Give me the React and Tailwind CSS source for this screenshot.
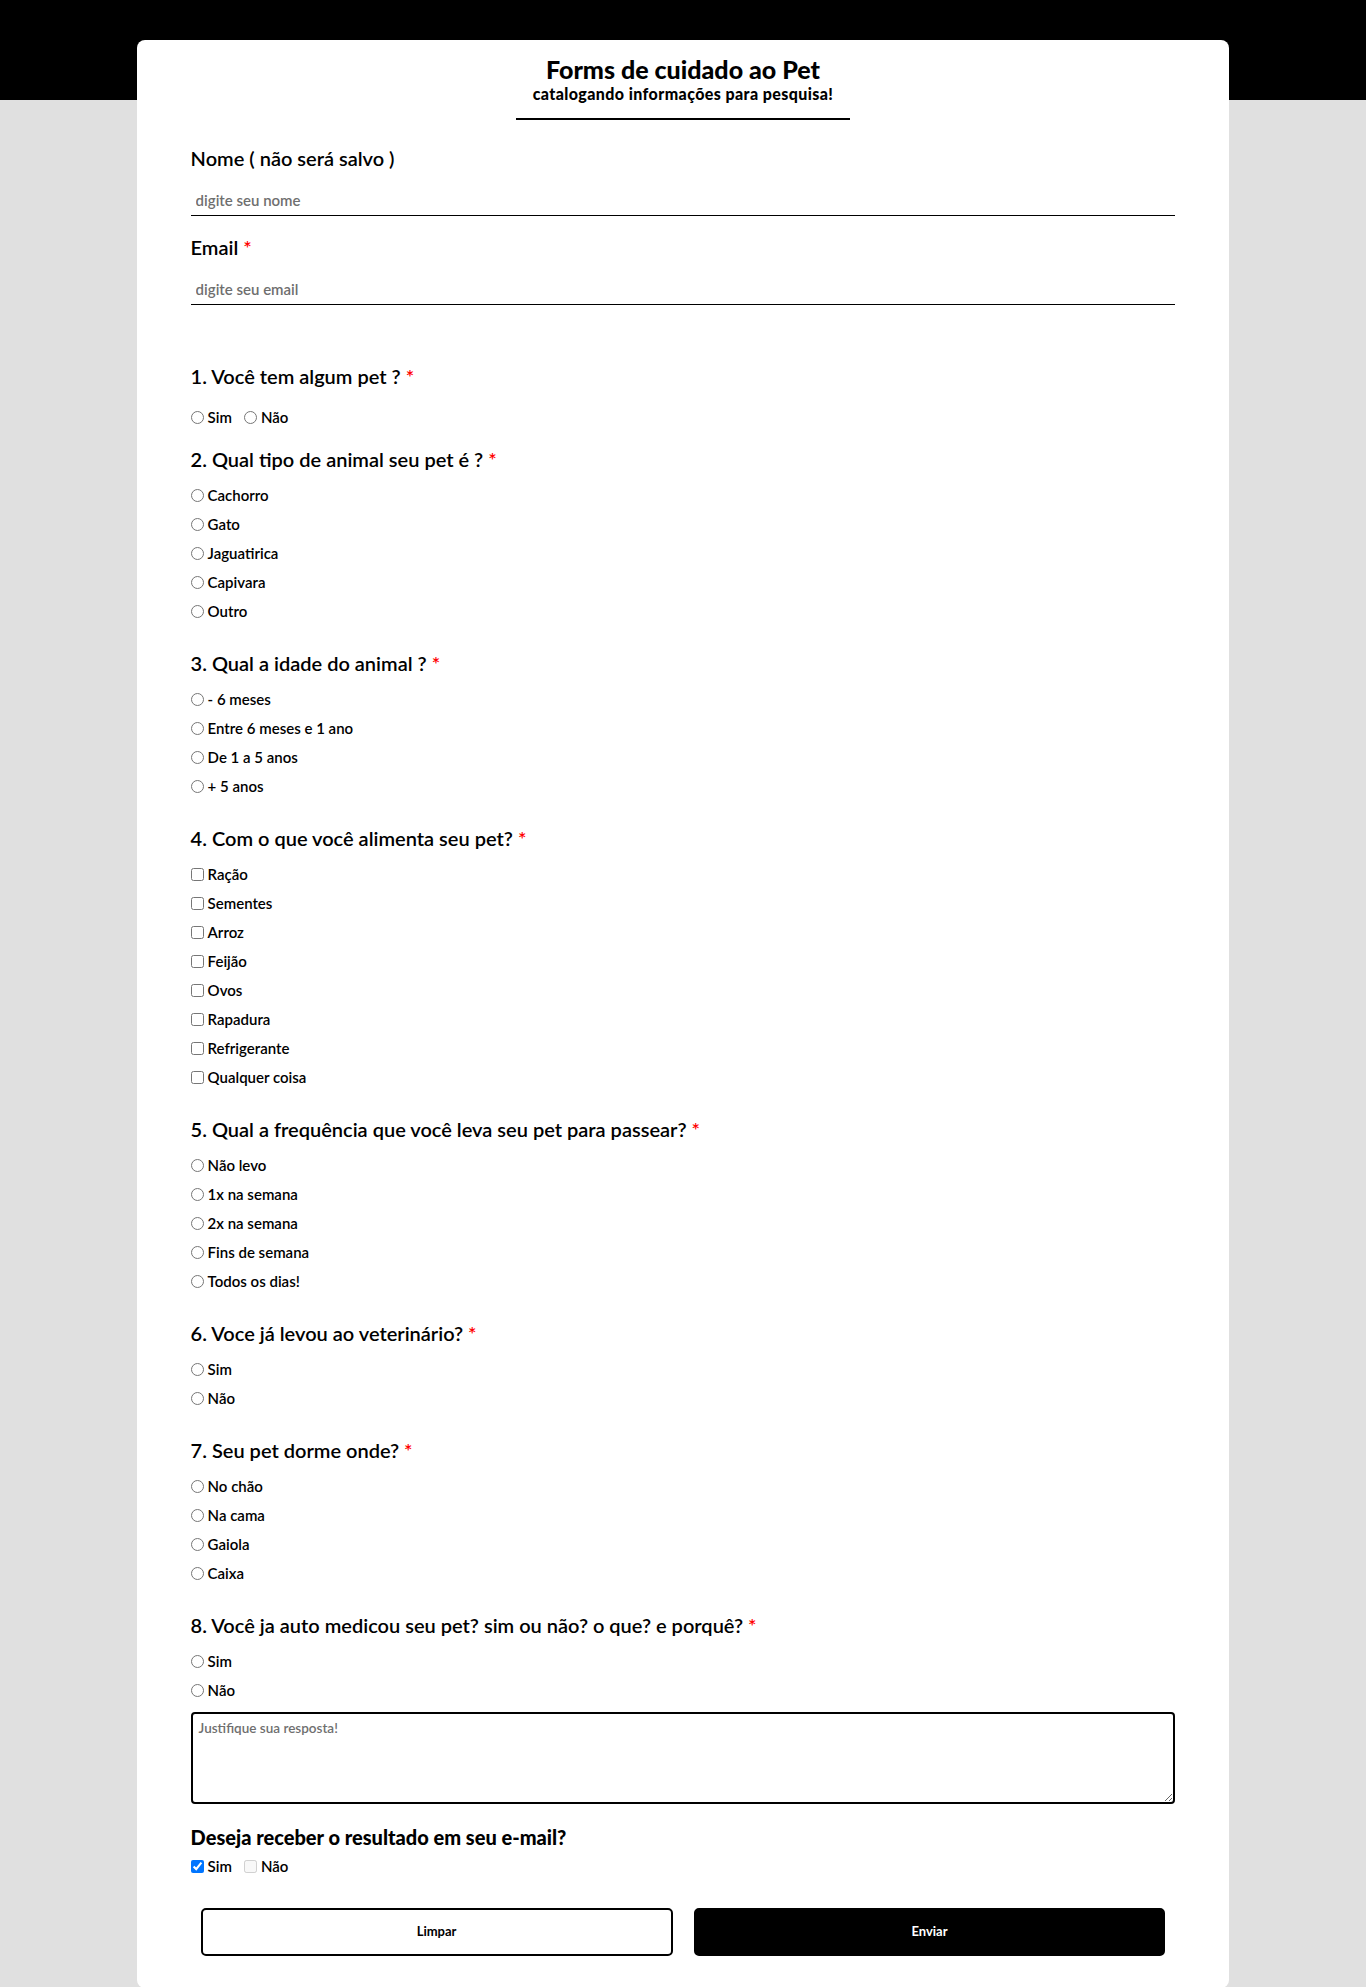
import React from "react";

const Req = () => <span className="text-[#ff0000] ml-[5px]">*</span>;

function Heading({ children, req = true }) {
  return (
    <h2 className="text-[20px] leading-[24px] font-semibold text-black">
      {children}
      {req && <Req />}
    </h2>
  );
}

function Option({ type = "radio", name, label }) {
  return (
    <label className="flex items-center gap-[4px] text-[15px] leading-[20px] font-semibold text-black">
      <input type={type} name={name} className="w-[13px] h-[13px]" />
      <span>{label}</span>
    </label>
  );
}

function Question({ title, name, type = "radio", options, mt = "mt-[30px]" }) {
  return (
    <section className={mt}>
      <Heading>{title}</Heading>
      <div className="mt-[14px] flex flex-col gap-[9px]">
        {options.map((o) => (
          <Option key={o} type={type} name={name} label={o} />
        ))}
      </div>
    </section>
  );
}

export default function App() {
  return (
    <div className="min-h-[1987px] bg-[linear-gradient(to_bottom,#000_100px,#e0e0e0_100px)] pt-[40px] font-[Lato,'Noto_Sans',sans-serif] text-black">
      <div className="mx-auto w-[80%] bg-white rounded-[8px] px-[54px] pt-[15px] pb-[32px] min-h-[1947px]">
        <header className="mx-auto w-[334px] border-b-2 border-black pb-[16px] text-center">
          <h1 className="text-[25px] leading-[28px] font-black">Forms de cuidado ao Pet</h1>
          <p className="mt-[2px] text-[16px] leading-[17px] font-black tracking-[0.4px]">catalogando informações para pesquisa!</p>
        </header>

        <div className="mt-[26px]">
          <label className="block text-[20px] leading-[24px] font-semibold">Nome ( não será salvo )</label>
          <input
            type="text"
            placeholder="digite seu nome"
            className="mt-[15px] block w-full h-[31px] border-b border-black px-[5px] text-[15px] font-semibold placeholder:text-[#6f6f6f] outline-none"
          />
        </div>
        <div className="mt-[19px]">
          <label className="block text-[20px] leading-[24px] font-semibold">
            Email<Req />
          </label>
          <input
            type="email"
            placeholder="digite seu email"
            className="mt-[15px] block w-full h-[31px] border-b border-black px-[5px] text-[15px] font-semibold placeholder:text-[#6f6f6f] outline-none"
          />
        </div>

        <section className="mt-[59px]">
          <Heading>1. Você tem algum pet ?</Heading>
          <div className="mt-[19px] flex items-center gap-[12px]">
            <Option name="q1" label="Sim" />
            <Option name="q1" label="Não" />
          </div>
        </section>

        <Question
          mt="mt-[20px]"
          title="2. Qual tipo de animal seu pet é ?"
          name="q2"
          options={["Cachorro", "Gato", "Jaguatirica", "Capivara", "Outro"]}
        />
        <Question
          title="3. Qual a idade do animal ?"
          name="q3"
          options={["- 6 meses", "Entre 6 meses e 1 ano", "De 1 a 5 anos", "+ 5 anos"]}
        />
        <Question
          title="4. Com o que você alimenta seu pet?"
          name="q4"
          type="checkbox"
          options={["Ração", "Sementes", "Arroz", "Feijão", "Ovos", "Rapadura", "Refrigerante", "Qualquer coisa"]}
        />
        <Question
          title="5. Qual a frequência que você leva seu pet para passear?"
          name="q5"
          options={["Não levo", "1x na semana", "2x na semana", "Fins de semana", "Todos os dias!"]}
        />
        <Question title="6. Voce já levou ao veterinário?" name="q6" options={["Sim", "Não"]} />
        <Question title="7. Seu pet dorme onde?" name="q7" options={["No chão", "Na cama", "Gaiola", "Caixa"]} />
        <Question
          title="8. Você ja auto medicou seu pet? sim ou não? o que? e porquê?"
          name="q8"
          options={["Sim", "Não"]}
        />

        <textarea
          placeholder="Justifique sua resposta!"
          className="mt-[12px] block w-full h-[92px] border-2 border-black rounded-[4px] px-[6px] py-[4px] text-[13.5px] font-semibold placeholder:text-[#6f6f6f] outline-none"
        />

        <section className="mt-[21px]">
          <h2 className="text-[20px] leading-[24px] font-black">Deseja receber o resultado em seu e-mail?</h2>
          <div className="mt-[7px] flex items-center gap-[12px]">
            <label className="flex items-center gap-[4px] text-[15px] leading-[20px] font-semibold">
              <input type="checkbox" defaultChecked className="w-[13px] h-[13px]" />
              <span>Sim</span>
            </label>
            <label className="flex items-center gap-[4px] text-[15px] leading-[20px] font-semibold">
              <input type="checkbox" disabled className="w-[13px] h-[13px]" />
              <span>Não</span>
            </label>
          </div>
        </section>

        <div className="mt-[32px] flex gap-[21px] px-[10px]">
          <button
            type="reset"
            className="flex-1 h-[48px] border-2 border-black rounded-[5px] bg-white text-[13px] font-bold text-black"
          >
            Limpar
          </button>
          <button
            type="submit"
            className="flex-1 h-[48px] border-2 border-black rounded-[5px] bg-black text-[13px] font-bold text-white"
          >
            Enviar
          </button>
        </div>
      </div>
    </div>
  );
}
